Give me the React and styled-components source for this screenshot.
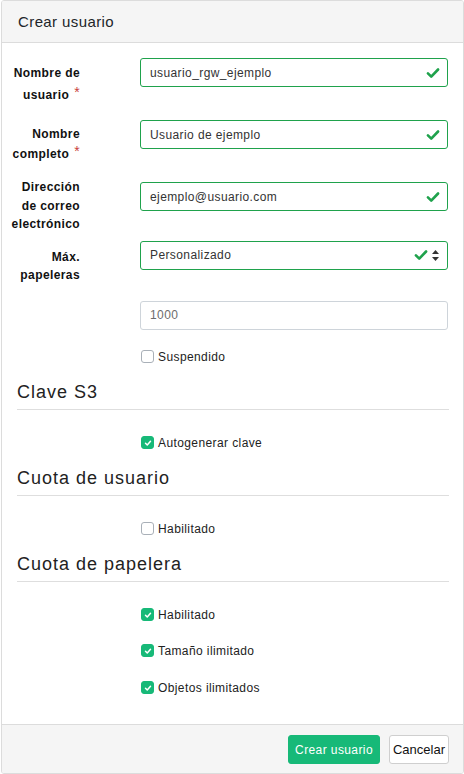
import styled, { createGlobalStyle } from "styled-components";

const GlobalStyle = createGlobalStyle`
  body {
    margin: 0;
    font-family: "Liberation Sans", Arial, sans-serif;
    letter-spacing: 0.4px;
    color: #212529;
    background: #fff;
  }
  * { box-sizing: border-box; }
`;

const green = "#1fa24c";
const teal = "#17b978";

const Modal = styled.div`
  width: 463px;
  height: 774px;
  margin-left: 1px;
  border: 1px solid #dcdcdc;
  border-radius: 3px;
  display: flex;
  flex-direction: column;
  overflow: hidden;
`;

const Header = styled.div`
  height: 42px;
  padding-left: 16px;
  display: flex;
  align-items: center;
  background: #f5f5f5;
  border-bottom: 1px solid #dcdcdc;
  font-size: 15px;
  color: #212529;
`;

const Body = styled.div`
  flex: 1;
  padding: 15px 14px 0 15px;
`;

const Row = styled.div`
  display: grid;
  grid-template-columns: 69px 308px;
  column-gap: 60px;
  align-items: start;
  margin-left: -6px;
  margin-bottom: ${(p) => p.mb}px;
`;

const Label = styled.label`
  font-size: 12px;
  font-weight: bold;
  text-align: right;
  color: #111;
  line-height: ${(p) => p.lh || 19.5}px;
  padding-top: ${(p) => p.pt || 0}px;
  margin-top: ${(p) => p.mt || 0}px;
`;

const Req = styled.span`
  color: #c9413d;
  font-size: 14px;
  font-weight: normal;
  line-height: 0;
  vertical-align: 2px;
  margin-left: 5px;
`;

const Field = styled.div`
  height: 29px;
  display: flex;
  align-items: center;
  border: 1px solid ${(p) => (p.valid ? green : "#ced4da")};
  border-radius: 3px;
  padding: 0 7px 0 9px;
  gap: 5px;
  background: #fff;
`;

const Input = styled.input`
  flex: 1;
  min-width: 0;
  border: 0;
  outline: none;
  padding: 0;
  font: inherit;
  font-size: 12px;
  letter-spacing: 0.4px;
  color: ${(p) => (p.muted ? "#6c6c6c" : "#333")};
  background: transparent;
`;

const Arrows = styled.svg`
  width: 7px;
  height: 11px;
  margin-left: -1px;
  margin-right: 1px;
`;

const CheckRow = styled.div`
  display: flex;
  align-items: center;
  gap: 4px;
  height: 14px;
  margin-bottom: ${(p) => p.mb || 0}px;
  font-size: 12px;
  color: #222;
`;

const Box = styled.span`
  width: 13px;
  height: 13px;
  border-radius: 3px;
  display: flex;
  align-items: center;
  justify-content: center;
  border: 1px solid ${(p) => (p.checked ? teal : "#a9b0b8")};
  background: ${(p) => (p.checked ? teal : "#fff")};
`;

const Section = styled.h3`
  margin: 0 0 26px;
  font-size: 18px;
  font-weight: normal;
  letter-spacing: 1px;
  line-height: 22px;
  padding-bottom: 6px;
  border-bottom: 1px solid #dedede;
  color: #222;
`;

const Control = styled.div`
  padding-left: 124px;
`;

const Footer = styled.div`
  height: 49px;
  display: flex;
  align-items: center;
  justify-content: flex-end;
  gap: 9px;
  padding: 1px 14px 0 0;
  background: #f5f5f5;
  border-top: 1px solid #dcdcdc;
`;

const Button = styled.button`
  height: 29px;
  border-radius: 3px;
  font-family: inherit;
  cursor: pointer;
  ${(p) =>
    p.primary
      ? `background: ${teal}; color: #fff; border: 1px solid ${teal}; font-size: 12px; letter-spacing: 0.4px; padding: 0 6px;`
      : `background: #fff; color: #111; border: 1px solid #cfcfcf; font-size: 13px; letter-spacing: 0; padding: 0 3px;`}
`;

const Check = ({ size = 14, color = green }) => (
  <svg width={size} height={size} viewBox="0 0 16 16">
    <path
      d="M2.2 8.4 L6 12.2 L13.8 4"
      fill="none"
      stroke={color}
      strokeWidth="3"
      strokeLinecap="round"
      strokeLinejoin="round"
    />
  </svg>
);

const Checkbox = ({ checked, label, mb }) => (
  <CheckRow mb={mb}>
    <Box checked={checked}>
      {checked && (
        <svg width="8" height="8" viewBox="0 0 16 16">
          <path
            d="M3 8.5 L6.5 12 L13 4.5"
            fill="none"
            stroke="#fff"
            strokeWidth="3"
            strokeLinecap="round"
            strokeLinejoin="round"
          />
        </svg>
      )}
    </Box>
    {label}
  </CheckRow>
);

export default function App() {
  return (
    <>
      <GlobalStyle />
      <Modal>
        <Header>Crear usuario</Header>
        <Body>
          <Row mb={14}>
            <Label pt={4} lh={22}>
              Nombre de usuario<Req>*</Req>
            </Label>
            <Field valid>
              <Input defaultValue="usuario_rgw_ejemplo" />
              <Check />
            </Field>
          </Row>
          <Row mb={18}>
            <Label pt={4} lh={20}>
              Nombre completo<Req>*</Req>
            </Label>
            <Field valid>
              <Input defaultValue="Usuario de ejemplo" />
              <Check />
            </Field>
          </Row>
          <Row mb={7}>
            <Label mt={-4} lh={18.5}>
              Dirección de correo electrónico
            </Label>
            <Field valid>
              <Input defaultValue="ejemplo@usuario.com" />
              <Check />
            </Field>
          </Row>
          <Row mb={16}>
            <Label pt={7} lh={18.5}>
              Máx. papeleras
            </Label>
            <Field valid>
              <Input defaultValue="Personalizado" readOnly />
              <Check />
              <Arrows viewBox="0 0 7 11">
                <path d="M3.5 0 L7 4 H0 Z M3.5 11 L7 7 H0 Z" fill="#333" />
              </Arrows>
            </Field>
          </Row>
          <Row mb={20}>
            <span />
            <Field>
              <Input muted defaultValue="1000" />
            </Field>
          </Row>
          <Control>
            <Checkbox label="Suspendido" mb={17} />
          </Control>
          <Section>Clave S3</Section>
          <Control>
            <Checkbox checked label="Autogenerar clave" mb={17} />
          </Control>
          <Section>Cuota de usuario</Section>
          <Control>
            <Checkbox label="Habilitado" mb={17} />
          </Control>
          <Section>Cuota de papelera</Section>
          <Control>
            <Checkbox checked label="Habilitado" mb={22} />
            <Checkbox checked label="Tamaño ilimitado" mb={23} />
            <Checkbox checked label="Objetos ilimitados" />
          </Control>
        </Body>
        <Footer>
          <Button primary>Crear usuario</Button>
          <Button>Cancelar</Button>
        </Footer>
      </Modal>
    </>
  );
}
